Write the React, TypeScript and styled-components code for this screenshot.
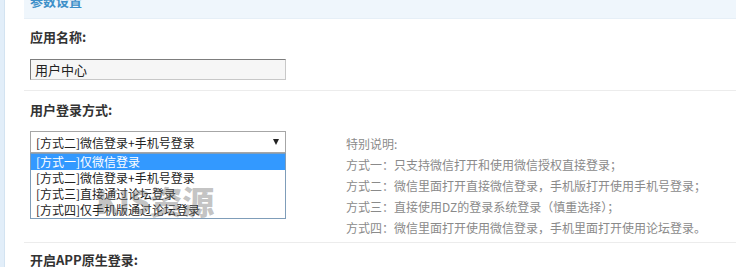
import React from "react";
import styled, { createGlobalStyle } from "styled-components";

const Global = createGlobalStyle`
  html, body { margin: 0; padding: 0; background: #fff; }
  body { font-family: "Noto Sans CJK SC", "Liberation Sans", sans-serif; overflow: hidden; }
`;

const Page = styled.div`
  display: flex;
  width: 738px;
  height: 267px;
  overflow: hidden;
`;

const LeftStrip = styled.div`
  width: 4px;
  background: #e2eef9;
  border-right: 1px solid #d3e3f1;
  flex: none;
`;

const Main = styled.div`
  flex: 1;
  margin-left: 19px;
  margin-right: 2px;
  display: flex;
  flex-direction: column;
`;

const Header = styled.div`
  height: 19px;
  flex: none;
  background: #eff6fc;
  border-bottom: 1px solid #e6eff7;
  padding-left: 6px;
  box-sizing: border-box;
  overflow: hidden;
`;

const HeaderTitle = styled.div`
  margin-top: -9px;
  line-height: 19px;
  font-size: 13px;
  font-weight: bold;
  color: #3d8fc8;
`;

const Field = styled.div<{ $top: number; $bottom: number; $line?: boolean }>`
  flex: none;
  padding: ${(p) => p.$top}px 6px ${(p) => p.$bottom}px;
  border-bottom: ${(p) => (p.$line ? "1px solid #ececec" : "none")};
`;

const Label = styled.div`
  font-size: 13px;
  line-height: 20px;
  height: 20px;
  font-weight: bold;
  color: #333;
`;

const TextInput = styled.div`
  margin-top: 12px;
  width: 256px;
  height: 21px;
  box-sizing: border-box;
  border: 1px solid #c8c8c8;
  border-top-color: #7d7d7d;
  border-left-color: #7d7d7d;
  background: #f6f6f6;
  font-size: 13px;
  line-height: 19px;
  padding-left: 4px;
  color: #222;
`;

const Row = styled.div`
  margin-top: 11px;
  display: flex;
  align-items: flex-start;
`;

const SelectWrap = styled.div`
  position: relative;
  width: 256px;
  flex: none;
`;

const SelectBox = styled.div`
  height: 22px;
  box-sizing: border-box;
  border: 1px solid #a6a6a6;
  background: #fff;
  display: flex;
  align-items: center;
  justify-content: space-between;
  padding: 0 6px 0 5px;
  font-size: 12px;
  color: #222;
`;

const Arrow = styled.span`
  width: 0;
  height: 0;
  border-left: 3.5px solid transparent;
  border-right: 3.5px solid transparent;
  border-top: 6px solid #222;
`;

const OptionList = styled.div`
  position: absolute;
  left: 0;
  top: 22px;
  width: 256px;
  box-sizing: border-box;
  border: 1px solid #7f9db9;
  background: #fff;
  z-index: 1;
`;

const Option = styled.div<{ $active?: boolean }>`
  height: 16px;
  line-height: 16px;
  padding-left: 5px;
  font-size: 12px;
  color: ${(p) => (p.$active ? "#fff" : "#222")};
  background: ${(p) => (p.$active ? "#3399ff" : "transparent")};
  white-space: nowrap;
`;

const Watermark = styled.div`
  position: absolute;
  left: 66px;
  top: 50px;
  font-size: 32px;
  line-height: 38px;
  font-weight: 900;
  color: rgba(110, 110, 110, 0.42);
  pointer-events: none;
  z-index: 2;
  white-space: nowrap;
`;

const Notes = styled.div`
  margin-left: 60px;
  padding-top: 2px;
  padding-bottom: 4px;
  font-size: 12px;
  line-height: 21px;
  color: #8a8a8a;
  white-space: nowrap;
`;

const options = [
  "[方式一]仅微信登录",
  "[方式二]微信登录+手机号登录",
  "[方式三]直接通过论坛登录",
  "[方式四]仅手机版通过论坛登录",
];

const notes = [
  "特别说明:",
  "方式一：只支持微信打开和使用微信授权直接登录；",
  "方式二：微信里面打开直接微信登录，手机版打开使用手机号登录；",
  "方式三：直接使用DZ的登录系统登录（慎重选择）；",
  "方式四：微信里面打开使用微信登录，手机里面打开使用论坛登录。",
];

export default function App() {
  return (
    <>
      <Global />
      <Page>
        <LeftStrip />
        <Main>
          <Header>
            <HeaderTitle>参数设置</HeaderTitle>
          </Header>
          <Field $top={8} $bottom={10} $line>
            <Label>应用名称:</Label>
            <TextInput>用户中心</TextInput>
          </Field>
          <Field $top={9} $bottom={0} $line>
            <Label>用户登录方式:</Label>
            <Row>
              <SelectWrap>
                <SelectBox>
                  <span>[方式二]微信登录+手机号登录</span>
                  <Arrow />
                </SelectBox>
                <OptionList>
                  {options.map((o, i) => (
                    <Option key={o} $active={i === 0}>
                      {o}
                    </Option>
                  ))}
                </OptionList>
                <Watermark>KIS资源</Watermark>
              </SelectWrap>
              <Notes>
                {notes.map((n) => (
                  <div key={n}>{n}</div>
                ))}
              </Notes>
            </Row>
          </Field>
          <Field $top={7} $bottom={0}>
            <Label>开启APP原生登录:</Label>
          </Field>
        </Main>
      </Page>
    </>
  );
}
